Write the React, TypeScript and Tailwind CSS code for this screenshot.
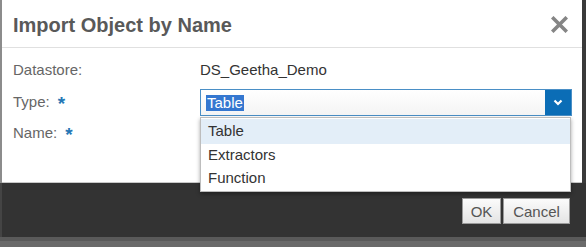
import React from "react";

const font = { fontFamily: '"Liberation Sans", Arial, sans-serif' };

export default function App() {
  return (
    <div className="relative w-[586px] h-[247px] overflow-hidden bg-[#333333] flex flex-col" style={font}>
      {/* Top: dialog panel */}
      <div className="flex h-[183px] shrink-0">
        <div className="w-[2px] bg-[#8c8c8c]" />
        <div className="w-[580px] bg-white flex flex-col border-b border-[#c8c8c8]">
          <div className="h-[48px] border-b border-[#e0e0e0] flex items-center justify-between pl-[11px] pr-[14px]">
            <span className="text-[20px] font-bold text-[#595959] leading-none mt-[3px]">Import Object by Name</span>
            <svg width="17" height="17" viewBox="0 0 17 17" className="mt-[2px]">
              <path d="M2.5 2.5 L14.5 14.5 M14.5 2.5 L2.5 14.5" stroke="#858585" strokeWidth="3.6" strokeLinecap="square" />
            </svg>
          </div>
          <div className="flex flex-col pt-[7px]">
            <div className="flex items-center h-[30px]">
              <div className="w-[198px] pl-[11px] text-[15px] text-[#666666]">Datastore:</div>
              <div className="text-[15px] text-[#333333]">DS_Geetha_Demo</div>
            </div>
            <div className="flex items-center h-[27px] mt-[4px]">
              <div className="w-[198px] pl-[11px] text-[15px] text-[#666666] flex items-center">
                Type:<span className="ml-[8px] text-[#2577b5] font-bold text-[19px] leading-none mt-[2px]">*</span>
              </div>
              <div className="w-[372px] h-[27px] border border-[#4a8fc6] flex items-center bg-gradient-to-b from-white to-[#f4f4f4]">
                <div className="flex-1 pl-[5px] flex items-center">
                  <span className="bg-[#3477d0] text-white text-[15px] leading-[16px] px-[1px]">Table</span>
                </div>
                <div className="w-[26px] h-full bg-[#0b6db6] flex items-center justify-center">
                  <svg width="10" height="7" viewBox="0 0 10 7">
                    <path d="M1.5 1.5 L5 5 L8.5 1.5" stroke="white" strokeWidth="2.2" fill="none" />
                  </svg>
                </div>
              </div>
            </div>
            <div className="flex items-center h-[27px] mt-[4px]">
              <div className="w-[198px] pl-[11px] text-[15px] text-[#666666] flex items-center">
                Name:<span className="ml-[8px] text-[#2577b5] font-bold text-[19px] leading-none mt-[2px]">*</span>
              </div>
            </div>
          </div>
        </div>
        <div className="flex-1 bg-[#3a3a3a]" />
      </div>

      {/* Footer */}
      <div className="h-[54px] shrink-0 flex items-start justify-end gap-[2px] pr-[16px] pt-[15px] border-l-2 border-[#444444]">
        <button className="w-[39px] h-[26px] border border-[#9a9a9a] bg-gradient-to-b from-[#fbfbfb] to-[#e4e4e4] text-[15px] text-[#555555] leading-none">OK</button>
        <button className="w-[67px] h-[26px] border border-[#9a9a9a] bg-gradient-to-b from-[#fbfbfb] to-[#e4e4e4] text-[15px] text-[#555555] leading-none">Cancel</button>
      </div>
      <div className="h-[4px] bg-[#5a5a5a]" />
      <div className="flex-1 bg-[#6a6a6a]" />

      {/* Dropdown list overlay */}
      <div className="absolute left-[200px] top-[117px] w-[371px] h-[75px] bg-white border border-[#bdbdbd] shadow-[0_2px_4px_rgba(0,0,0,0.35)] flex flex-col pt-[1px]">
        <div className="h-[25px] bg-[#e3eef8] flex items-center pl-[7px] text-[15px] text-[#333333]">Table</div>
        <div className="h-[23px] flex items-center pl-[7px] text-[15px] text-[#333333]">Extractors</div>
        <div className="h-[23px] flex items-center pl-[7px] text-[15px] text-[#333333]">Function</div>
      </div>
    </div>
  );
}
